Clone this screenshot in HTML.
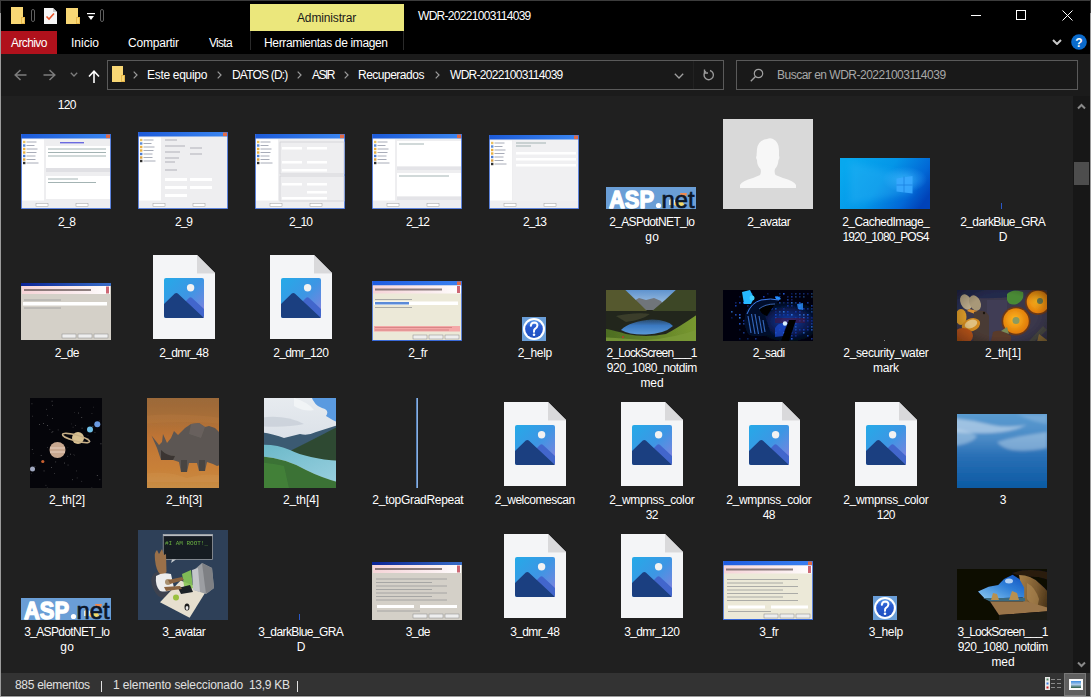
<!DOCTYPE html>
<html><head><meta charset="utf-8">
<style>
*{margin:0;padding:0;box-sizing:border-box}
html,body{width:1091px;height:697px;overflow:hidden;background:#9c9c9c}
body{position:relative;font-family:"Liberation Sans",sans-serif;font-size:12px;color:#fff}
.a{position:absolute}
#win{position:absolute;left:1px;top:1px;width:1089px;height:695px;background:#000;overflow:hidden}
#titlebar{position:absolute;left:0;top:0;width:1089px;height:53px;background:#000}
#addr{position:absolute;left:0;top:53px;width:1089px;height:42px;background:#1b1b1b}
#content{position:absolute;left:0;top:95px;width:1072px;height:577px;background:#202020;overflow:hidden}
#scroll{position:absolute;left:1072px;top:95px;width:17px;height:577px;background:#171717}
#status{position:absolute;left:0;top:672px;width:1089px;height:23px;background:#333333;border-bottom:1px solid #2a2a2a}
.rb{position:absolute;left:0;top:0;width:1091px;height:1px;background:#3c3c3c}
.bb{position:absolute;left:0;top:0;width:1px;height:13px;background:#3c3c3c;box-shadow:1090px 0 0 #3c3c3c}
.lb{position:absolute;left:0;top:12px;width:1px;height:685px;background:#4a5868}
.t{position:absolute;white-space:nowrap;line-height:15px}
.lbl{position:absolute;width:120px;text-align:center;line-height:15px;white-space:nowrap;color:#fff;}
.fi{position:absolute}
.lbl i{font-style:normal;position:relative;top:-1px}
.dlg,.dlgde,.dlgfr,.asp,.avatar,.win10,.thinblue,.help,.lock1,.lock2,.sadi,.dot,.food,.space,.rhino,.lake,.topgrad,.sky,.groot{position:absolute;overflow:hidden}
</style></head><body>
<svg width="0" height="0" style="position:absolute">
<defs>
<linearGradient id="imgg" x1="0" y1="0" x2="1" y2="1">
<stop offset="0" stop-color="#25aae8"/><stop offset="0.5" stop-color="#3d96e4"/><stop offset="0.8" stop-color="#6a88e0"/><stop offset="1" stop-color="#9a7ee0"/>
</linearGradient>
<symbol id="fileico" viewBox="0 0 62 84">
<path d="M0 0H44L62 18V84H0Z" fill="#f4f5f7"/>
<path d="M44 0V18H62Z" fill="#d9d9db"/>
<path d="M44 18H62V19H44Z" fill="#e8e8ea"/>
<rect x="11" y="23" width="40" height="40" rx="2" fill="url(#imgg)"/>
<path d="M32 47 L36.2 42.8 Q37.5 41.6 38.8 42.8 L51 54 V61 Q51 63 49 63 Z" fill="#4266cc"/>
<path d="M11 49 L21.8 38.6 Q23.3 37.2 24.8 38.6 L51 63 H13 Q11 63 11 61Z" fill="#1b3f80"/>
<circle cx="37.6" cy="32.7" r="3.7" fill="#f2f2f2"/>
</symbol>
</defs>
</svg>
<div id="win">
  <div id="titlebar"></div>
  <div id="addr"></div>
  <div id="content">
  </div>
  <div id="scroll"></div>
  <div id="status"></div>
</div>
<div id="abs" style="position:absolute;left:0;top:0;width:1091px;height:697px">
<!-- quick access toolbar -->
<svg class="a" style="left:11px;top:7px" width="14" height="17" viewBox="0 0 14 17"><path d="M0 0H12V10H14V17H0Z" fill="#f8d775"/><path d="M10 10H14V17H10Z" fill="#e8b84a"/><path d="M11 11H13V16H11Z" fill="#f8d775"/></svg>
<div class="a" style="left:31px;top:9px;width:4px;height:13px;border:1px solid #5e5e5e;border-radius:2px"></div>
<svg class="a" style="left:44px;top:8px" width="13" height="16" viewBox="0 0 13 16"><path d="M0 0H9L13 4V16H0Z" fill="#f5f5f5"/><path d="M9 0V4H13Z" fill="#c8c8c8"/><path d="M2.5 8.5L5 11L10 5.5" stroke="#e8552a" stroke-width="1.6" fill="none"/></svg>
<svg class="a" style="left:66px;top:8px" width="14" height="16" viewBox="0 0 14 16"><path d="M0 0H12V9H14V16H0Z" fill="#f8d775"/><path d="M10 9H14V16H10Z" fill="#e8b84a"/><path d="M11 10H13V15H11Z" fill="#f8d775"/></svg>
<svg class="a" style="left:87px;top:13px" width="8" height="8" viewBox="0 0 8 8"><rect x="0" y="0" width="8" height="1.2" fill="#fff"/><path d="M1 3H7L4 7Z" fill="#fff"/></svg>
<div class="a" style="left:100px;top:9px;width:4px;height:13px;border:1px solid #5e5e5e;border-radius:2px"></div>
<!-- contextual tab -->
<div class="a" style="left:250px;top:4px;width:154px;height:27px;background:#ebe77c"></div>
<div class="a" style="left:250px;top:31px;width:1px;height:19px;background:#2a2a2a"></div>
<div class="a" style="left:403px;top:31px;width:1px;height:19px;background:#2a2a2a"></div>
<div class="t" style="left:297px;top:11px;color:#1a1a1a;letter-spacing:-0.15px">Administrar</div>
<div class="t" style="left:418px;top:9px;color:#fff;letter-spacing:-0.7px">WDR-20221003114039</div>
<!-- window buttons -->
<div class="a" style="left:971px;top:15px;width:10px;height:1px;background:#fff"></div>
<div class="a" style="left:1016px;top:10px;width:10px;height:10px;border:1px solid #fff"></div>
<svg class="a" style="left:1062px;top:10px" width="11" height="11" viewBox="0 0 11 11"><path d="M0.5 0.5L10.5 10.5M10.5 0.5L0.5 10.5" stroke="#fff" stroke-width="1"/></svg>
<!-- ribbon tabs -->
<div class="a" style="left:1px;top:31px;width:56px;height:23px;background:#b0111c"></div>
<div class="t" style="left:11px;top:36px;letter-spacing:-0.6px">Archivo</div>
<div class="t" style="left:71px;top:36px">Inicio</div>
<div class="t" style="left:128px;top:36px;letter-spacing:-0.2px">Compartir</div>
<div class="t" style="left:209px;top:36px;letter-spacing:-0.7px">Vista</div>
<div class="t" style="left:264px;top:36px;letter-spacing:-0.35px">Herramientas de imagen</div>
<svg class="a" style="left:1052px;top:39px" width="10" height="6" viewBox="0 0 10 6"><path d="M1 1L5 5L9 1" stroke="#c8c8c8" stroke-width="2" fill="none"/></svg>
<svg class="a" style="left:1071px;top:34px" width="16" height="16" viewBox="0 0 16 16"><circle cx="8" cy="8" r="7.8" fill="#0b6bcc"/><text x="8" y="12.5" font-family="Liberation Sans" font-weight="bold" font-size="12" fill="#fff" text-anchor="middle">?</text></svg>
<!-- address row -->
<svg class="a" style="left:14px;top:69px" width="13" height="12" viewBox="0 0 13 12"><path d="M12.5 6H1.5M6.5 1L1.2 6L6.5 11" stroke="#7d7d7d" stroke-width="1.5" fill="none"/></svg>
<svg class="a" style="left:43px;top:69px" width="13" height="12" viewBox="0 0 13 12"><path d="M0.5 6H11.5M6.5 1L11.8 6L6.5 11" stroke="#7d7d7d" stroke-width="1.5" fill="none"/></svg>
<svg class="a" style="left:70px;top:72px" width="8" height="5" viewBox="0 0 8 5"><path d="M0.8 0.8L4 4L7.2 0.8" stroke="#7d7d7d" stroke-width="1.3" fill="none"/></svg>
<svg class="a" style="left:88px;top:70px" width="12" height="13" viewBox="0 0 12 13"><path d="M6 13V1.5M1 6.5L6 1.2L11 6.5" stroke="#fff" stroke-width="1.6" fill="none"/></svg>
<div class="a" style="left:107px;top:60px;width:617px;height:30px;border:1px solid #5a5a5a;background:#191919"></div>
<div class="a" style="left:693px;top:61px;width:1px;height:28px;background:#222"></div>
<svg class="a" style="left:112px;top:66px" width="13" height="16" viewBox="0 0 13 16"><path d="M0 0H11V9H13V16H0Z" fill="#f8d775"/><path d="M9 9H13V16H9Z" fill="#e8b84a"/><path d="M10 10H12V15H10Z" fill="#f8d775"/></svg>
<svg class="a" style="left:133px;top:71px" width="5" height="8" viewBox="0 0 5 8"><path d="M0.7 0.7L4 4L0.7 7.3" stroke="#9a9a9a" stroke-width="1.2" fill="none"/></svg>
<div class="t" style="left:147px;top:68px;letter-spacing:-0.3px">Este equipo</div>
<svg class="a" style="left:217px;top:71px" width="5" height="8" viewBox="0 0 5 8"><path d="M0.7 0.7L4 4L0.7 7.3" stroke="#9a9a9a" stroke-width="1.2" fill="none"/></svg>
<div class="t" style="left:232px;top:68px;letter-spacing:-0.8px">DATOS (D:)</div>
<svg class="a" style="left:297px;top:71px" width="5" height="8" viewBox="0 0 5 8"><path d="M0.7 0.7L4 4L0.7 7.3" stroke="#9a9a9a" stroke-width="1.2" fill="none"/></svg>
<div class="t" style="left:312px;top:68px;letter-spacing:-1.5px">ASIR</div>
<svg class="a" style="left:344px;top:71px" width="5" height="8" viewBox="0 0 5 8"><path d="M0.7 0.7L4 4L0.7 7.3" stroke="#9a9a9a" stroke-width="1.2" fill="none"/></svg>
<div class="t" style="left:358px;top:68px;letter-spacing:-0.5px">Recuperados</div>
<svg class="a" style="left:435px;top:71px" width="5" height="8" viewBox="0 0 5 8"><path d="M0.7 0.7L4 4L0.7 7.3" stroke="#9a9a9a" stroke-width="1.2" fill="none"/></svg>
<div class="t" style="left:450px;top:68px;letter-spacing:-0.7px">WDR-20221003114039</div>
<svg class="a" style="left:674px;top:73px" width="10" height="6" viewBox="0 0 10 6"><path d="M0.8 0.8L5 5L9.2 0.8" stroke="#a0a0a0" stroke-width="1.3" fill="none"/></svg>
<svg class="a" style="left:703px;top:69px" width="12" height="12" viewBox="0 0 12 12"><path d="M3 2.2A4.7 4.7 0 1 0 7 1.5" stroke="#9a9a9a" stroke-width="1.4" fill="none"/><path d="M1.5 0.5V4H5" stroke="#9a9a9a" stroke-width="1.4" fill="none"/></svg>
<div class="a" style="left:736px;top:60px;width:342px;height:30px;border:1px solid #5a5a5a;background:#191919"></div>
<svg class="a" style="left:750px;top:68px" width="14" height="14" viewBox="0 0 14 14"><circle cx="8.5" cy="5.5" r="4.2" stroke="#a0a0a0" stroke-width="1.2" fill="none"/><path d="M5.5 8.5L0.8 13.2" stroke="#a0a0a0" stroke-width="1.3"/></svg>
<div class="t" style="left:777px;top:68px;color:#a8a8a8;letter-spacing:-0.5px">Buscar en WDR-20221003114039</div>
<!-- scrollbar -->
<svg class="a" style="left:1077px;top:103px" width="9" height="7" viewBox="0 0 9 7"><path d="M1 5.5L4.5 2L8 5.5" stroke="#8a8a8a" stroke-width="2" fill="none"/></svg>
<div class="a" style="left:1074px;top:162px;width:15px;height:23px;background:#4d4d4d"></div>
<svg class="a" style="left:1077px;top:661px" width="9" height="7" viewBox="0 0 9 7"><path d="M1 1.5L4.5 5L8 1.5" stroke="#8a8a8a" stroke-width="2" fill="none"/></svg>
<!-- status bar -->
<div class="t" style="left:15px;top:678px;color:#e0e0e0;letter-spacing:-0.3px">885 elementos</div>
<div class="a" style="left:101px;top:681px;width:1px;height:11px;background:#e0e0e0"></div>
<div class="t" style="left:113px;top:678px;color:#e0e0e0;letter-spacing:-0.12px">1 elemento seleccionado</div>
<div class="t" style="left:249px;top:678px;color:#e0e0e0;letter-spacing:-0.3px">13,9 KB</div>
<div class="a" style="left:297px;top:681px;width:1px;height:11px;background:#e0e0e0"></div>
<svg class="a" style="left:1045px;top:677px" width="16" height="13" viewBox="0 0 16 13"><rect x="0" y="0" width="5" height="13" fill="#e8e8e8"/><rect x="1.5" y="1.5" width="2" height="2" fill="#5a8a6a"/><rect x="1.5" y="5.5" width="2" height="2" fill="#3a7ae0"/><rect x="1.5" y="9.5" width="2" height="2" fill="#d02020"/><path d="M6 2.5H10M12 2.5H16M6 6.5H10M12 6.5H16M6 10.5H10M12 10.5H16" stroke="#8a8a8a" stroke-width="1"/></svg>
<div class="a" style="left:1064px;top:673px;width:22px;height:23px;background:#5f5f5f;border:1px solid #787878"></div>
<svg class="a" style="left:1069px;top:679px" width="14" height="11" viewBox="0 0 14 11"><rect width="14" height="11" fill="#fafafa"/><defs><linearGradient id="vg" x1="0" y1="0" x2="0" y2="1"><stop offset="0" stop-color="#3d8de0"/><stop offset="0.5" stop-color="#a8c8e8"/><stop offset="1" stop-color="#2a5a40"/></linearGradient></defs><rect x="2" y="2" width="10" height="7" fill="url(#vg)"/></svg>
<div class="rb"></div><div class="bb"></div>

<div id="clip" style="position:absolute;left:1px;top:96px;width:1072px;height:577px;overflow:hidden">
<div style="position:absolute;left:-1px;top:-96px;width:1091px;height:697px">
<div class="lbl" style="left:7.0px;top:97.7px"><div style="letter-spacing:-0.677px;text-indent:-0.677px">120</div></div>
<svg class="a" style="left:21px;top:134px" width="90" height="75" viewBox="0 0 90 75"><rect width="90" height="75" fill="#eeeef0"/><defs><linearGradient id="xpt" x1="0" x2="1"><stop offset="0" stop-color="#1c5ad8"/><stop offset="1" stop-color="#3b86f0"/></linearGradient></defs><rect width="90" height="4.5" fill="url(#xpt)"/><rect x="85" y="0.5" width="4" height="3.6" fill="#e06a48"/><rect x="0" y="0" width="0.8" height="75" fill="#3a6ad8"/><rect x="89.2" y="0" width="0.8" height="75" fill="#3a6ad8"/><rect x="0" y="74.2" width="90" height="0.8" fill="#3a6ad8"/><rect x="1" y="5.5" width="22" height="61" fill="#ffffff"/><path d="M5.5 8H15.5" stroke="#a8acb8" stroke-width="1.0"/><path d="M5.5 11.5H13.5" stroke="#a8acb8" stroke-width="1.0"/><path d="M5.5 15H16.5" stroke="#a8acb8" stroke-width="1.0"/><path d="M5.5 18.5H15.5" stroke="#a8acb8" stroke-width="1.0"/><path d="M5.5 22H14.5" stroke="#a8acb8" stroke-width="1.0"/><path d="M5.5 25.5H14.5" stroke="#a8acb8" stroke-width="1.0"/><path d="M5.5 29H17.5" stroke="#a8acb8" stroke-width="1.0"/><rect x="2" y="6.8" width="2.4" height="2.4" fill="#e8c060"/><rect x="2" y="10.3" width="2.4" height="2.4" fill="#5a8ad8"/><rect x="2" y="13.8" width="2.4" height="2.4" fill="#e8b040"/><rect x="2" y="17.3" width="2.4" height="2.4" fill="#e8b040"/><rect x="2" y="20.8" width="2.4" height="2.4" fill="#4a7ad0"/><rect x="2" y="24.3" width="2.4" height="2.4" fill="#d8a040"/><rect x="2" y="27.8" width="2.4" height="2.4" fill="#303030"/><rect x="25" y="12" width="64" height="22" fill="#fff"/><rect x="25" y="34" width="64" height="4" fill="#e0e0e4"/><rect x="25" y="42" width="64" height="23" fill="#fff"/><path d="M27 15H85" stroke="#9aa" stroke-width="0.9"/><path d="M27 18.5H85" stroke="#9aa" stroke-width="0.9"/><path d="M27 22H85" stroke="#9aa" stroke-width="0.9"/><path d="M27 45H57" stroke="#9aa" stroke-width="0.9"/><path d="M27 48.5H75" stroke="#9aa" stroke-width="0.9"/><rect x="39" y="8" width="24" height="1.4" fill="#6a6ae0"/><rect x="15" y="69.5" width="12" height="3" fill="#fff" stroke="#a0a0a0" stroke-width="0.5"/><rect x="55" y="69.5" width="12" height="3" fill="#fff" stroke="#a0a0a0" stroke-width="0.5"/></svg>
<svg class="a" style="left:138px;top:132px" width="90" height="77" viewBox="0 0 90 77"><rect width="90" height="77" fill="#eeeef0"/><defs><linearGradient id="xpt" x1="0" x2="1"><stop offset="0" stop-color="#1c5ad8"/><stop offset="1" stop-color="#3b86f0"/></linearGradient></defs><rect width="90" height="4.5" fill="url(#xpt)"/><rect x="85" y="0.5" width="4" height="3.6" fill="#e06a48"/><rect x="0" y="0" width="0.8" height="77" fill="#3a6ad8"/><rect x="89.2" y="0" width="0.8" height="77" fill="#3a6ad8"/><rect x="0" y="76.2" width="90" height="0.8" fill="#3a6ad8"/><rect x="1" y="5.5" width="22" height="63" fill="#ffffff"/><path d="M5.5 8H15.5" stroke="#a8acb8" stroke-width="1.0"/><path d="M5.5 11.5H13.5" stroke="#a8acb8" stroke-width="1.0"/><path d="M5.5 15H16.5" stroke="#a8acb8" stroke-width="1.0"/><path d="M5.5 18.5H15.5" stroke="#a8acb8" stroke-width="1.0"/><path d="M5.5 22H14.5" stroke="#a8acb8" stroke-width="1.0"/><path d="M5.5 25.5H14.5" stroke="#a8acb8" stroke-width="1.0"/><path d="M5.5 29H17.5" stroke="#a8acb8" stroke-width="1.0"/><rect x="2" y="6.8" width="2.4" height="2.4" fill="#e8c060"/><rect x="2" y="10.3" width="2.4" height="2.4" fill="#5a8ad8"/><rect x="2" y="13.8" width="2.4" height="2.4" fill="#e8b040"/><rect x="2" y="17.3" width="2.4" height="2.4" fill="#e8b040"/><rect x="2" y="20.8" width="2.4" height="2.4" fill="#4a7ad0"/><rect x="2" y="24.3" width="2.4" height="2.4" fill="#d8a040"/><rect x="2" y="27.8" width="2.4" height="2.4" fill="#303030"/><path d="M27 8H39" stroke="#b0b0b8" stroke-width="1"/><path d="M27 14H47" stroke="#b0b0b8" stroke-width="1"/><path d="M27 20H42" stroke="#b0b0b8" stroke-width="1"/><path d="M27 26H41" stroke="#b0b0b8" stroke-width="1"/><path d="M27 30H37" stroke="#b0b0b8" stroke-width="1"/><path d="M52 16H64" stroke="#b0b0b8" stroke-width="1"/><path d="M52 22H64" stroke="#b0b0b8" stroke-width="1"/><path d="M27 38H39" stroke="#b0b0b8" stroke-width="1"/><rect x="27" y="46" width="22" height="3" fill="#fff"/><rect x="52" y="46" width="22" height="3" fill="#fff"/><rect x="27" y="54" width="22" height="3" fill="#fff"/><rect x="52" y="54" width="22" height="3" fill="#fff"/><rect x="27" y="62" width="22" height="3" fill="#fff"/><rect x="15" y="71.5" width="12" height="3" fill="#fff" stroke="#a0a0a0" stroke-width="0.5"/><rect x="55" y="71.5" width="12" height="3" fill="#fff" stroke="#a0a0a0" stroke-width="0.5"/></svg>
<svg class="a" style="left:255px;top:134px" width="90" height="75" viewBox="0 0 90 75"><rect width="90" height="75" fill="#eeeef0"/><defs><linearGradient id="xpt" x1="0" x2="1"><stop offset="0" stop-color="#1c5ad8"/><stop offset="1" stop-color="#3b86f0"/></linearGradient></defs><rect width="90" height="4.5" fill="url(#xpt)"/><rect x="85" y="0.5" width="4" height="3.6" fill="#e06a48"/><rect x="0" y="0" width="0.8" height="75" fill="#3a6ad8"/><rect x="89.2" y="0" width="0.8" height="75" fill="#3a6ad8"/><rect x="0" y="74.2" width="90" height="0.8" fill="#3a6ad8"/><rect x="1" y="5.5" width="22" height="61" fill="#ffffff"/><path d="M5.5 8H15.5" stroke="#a8acb8" stroke-width="1.0"/><path d="M5.5 11.5H13.5" stroke="#a8acb8" stroke-width="1.0"/><path d="M5.5 15H16.5" stroke="#a8acb8" stroke-width="1.0"/><path d="M5.5 18.5H15.5" stroke="#a8acb8" stroke-width="1.0"/><path d="M5.5 22H14.5" stroke="#a8acb8" stroke-width="1.0"/><path d="M5.5 25.5H14.5" stroke="#a8acb8" stroke-width="1.0"/><path d="M5.5 29H17.5" stroke="#a8acb8" stroke-width="1.0"/><rect x="2" y="6.8" width="2.4" height="2.4" fill="#e8c060"/><rect x="2" y="10.3" width="2.4" height="2.4" fill="#5a8ad8"/><rect x="2" y="13.8" width="2.4" height="2.4" fill="#e8b040"/><rect x="2" y="17.3" width="2.4" height="2.4" fill="#e8b040"/><rect x="2" y="20.8" width="2.4" height="2.4" fill="#4a7ad0"/><rect x="2" y="24.3" width="2.4" height="2.4" fill="#d8a040"/><rect x="2" y="27.8" width="2.4" height="2.4" fill="#303030"/><rect x="25" y="8" width="64" height="32" fill="none" stroke="#d0d0d4" stroke-width="0.8"/><rect x="25" y="42" width="64" height="25" fill="none" stroke="#d0d0d4" stroke-width="0.8"/><rect x="27" y="13" width="20" height="2.5" fill="#fff"/><rect x="52" y="13" width="20" height="2.5" fill="#fff"/><rect x="27" y="27" width="20" height="2.5" fill="#fff"/><rect x="52" y="27" width="20" height="2.5" fill="#fff"/><rect x="27" y="35" width="45" height="2.5" fill="#fff"/><rect x="27" y="49" width="20" height="2.5" fill="#fff"/><rect x="52" y="49" width="20" height="2.5" fill="#fff"/><rect x="52" y="57" width="20" height="2.5" fill="#fff"/><rect x="27" y="63" width="45" height="2.5" fill="#fff"/><rect x="15" y="69.5" width="12" height="3" fill="#fff" stroke="#a0a0a0" stroke-width="0.5"/><rect x="55" y="69.5" width="12" height="3" fill="#fff" stroke="#a0a0a0" stroke-width="0.5"/></svg>
<svg class="a" style="left:372px;top:134px" width="90" height="75" viewBox="0 0 90 75"><rect width="90" height="75" fill="#eeeef0"/><defs><linearGradient id="xpt" x1="0" x2="1"><stop offset="0" stop-color="#1c5ad8"/><stop offset="1" stop-color="#3b86f0"/></linearGradient></defs><rect width="90" height="4.5" fill="url(#xpt)"/><rect x="85" y="0.5" width="4" height="3.6" fill="#e06a48"/><rect x="0" y="0" width="0.8" height="75" fill="#3a6ad8"/><rect x="89.2" y="0" width="0.8" height="75" fill="#3a6ad8"/><rect x="0" y="74.2" width="90" height="0.8" fill="#3a6ad8"/><rect x="1" y="5.5" width="22" height="61" fill="#ffffff"/><path d="M5.5 8H15.5" stroke="#a8acb8" stroke-width="1.0"/><path d="M5.5 11.5H13.5" stroke="#a8acb8" stroke-width="1.0"/><path d="M5.5 15H16.5" stroke="#a8acb8" stroke-width="1.0"/><path d="M5.5 18.5H15.5" stroke="#a8acb8" stroke-width="1.0"/><path d="M5.5 22H14.5" stroke="#a8acb8" stroke-width="1.0"/><path d="M5.5 25.5H14.5" stroke="#a8acb8" stroke-width="1.0"/><path d="M5.5 29H17.5" stroke="#a8acb8" stroke-width="1.0"/><rect x="2" y="6.8" width="2.4" height="2.4" fill="#e8c060"/><rect x="2" y="10.3" width="2.4" height="2.4" fill="#5a8ad8"/><rect x="2" y="13.8" width="2.4" height="2.4" fill="#e8b040"/><rect x="2" y="17.3" width="2.4" height="2.4" fill="#e8b040"/><rect x="2" y="20.8" width="2.4" height="2.4" fill="#4a7ad0"/><rect x="2" y="24.3" width="2.4" height="2.4" fill="#d8a040"/><rect x="2" y="27.8" width="2.4" height="2.4" fill="#303030"/><rect x="25" y="7" width="64" height="25" fill="#fff"/><rect x="25" y="39" width="64" height="23" fill="#fff"/><rect x="25" y="33" width="64" height="3" fill="#e4e4e8"/><rect x="25" y="63" width="64" height="3" fill="#e4e4e8"/><path d="M27 10H52" stroke="#9aa" stroke-width="0.9"/><path d="M27 42H77" stroke="#9aa" stroke-width="0.9"/><rect x="15" y="69.5" width="12" height="3" fill="#fff" stroke="#a0a0a0" stroke-width="0.5"/><rect x="55" y="69.5" width="12" height="3" fill="#fff" stroke="#a0a0a0" stroke-width="0.5"/></svg>
<svg class="a" style="left:489px;top:135px" width="90" height="74" viewBox="0 0 90 74"><rect width="90" height="74" fill="#eeeef0"/><defs><linearGradient id="xpt" x1="0" x2="1"><stop offset="0" stop-color="#1c5ad8"/><stop offset="1" stop-color="#3b86f0"/></linearGradient></defs><rect width="90" height="4.5" fill="url(#xpt)"/><rect x="85" y="0.5" width="4" height="3.6" fill="#e06a48"/><rect x="0" y="0" width="0.8" height="74" fill="#3a6ad8"/><rect x="89.2" y="0" width="0.8" height="74" fill="#3a6ad8"/><rect x="0" y="73.2" width="90" height="0.8" fill="#3a6ad8"/><rect x="1" y="5.5" width="22" height="60" fill="#ffffff"/><path d="M5.5 8H15.5" stroke="#a8acb8" stroke-width="1.0"/><path d="M5.5 11.5H13.5" stroke="#a8acb8" stroke-width="1.0"/><path d="M5.5 15H16.5" stroke="#a8acb8" stroke-width="1.0"/><path d="M5.5 18.5H15.5" stroke="#a8acb8" stroke-width="1.0"/><path d="M5.5 22H14.5" stroke="#a8acb8" stroke-width="1.0"/><path d="M5.5 25.5H14.5" stroke="#a8acb8" stroke-width="1.0"/><path d="M5.5 29H17.5" stroke="#a8acb8" stroke-width="1.0"/><rect x="2" y="6.8" width="2.4" height="2.4" fill="#e8c060"/><rect x="2" y="10.3" width="2.4" height="2.4" fill="#5a8ad8"/><rect x="2" y="13.8" width="2.4" height="2.4" fill="#e8b040"/><rect x="2" y="17.3" width="2.4" height="2.4" fill="#e8b040"/><rect x="2" y="20.8" width="2.4" height="2.4" fill="#4a7ad0"/><rect x="2" y="24.3" width="2.4" height="2.4" fill="#d8a040"/><rect x="2" y="27.8" width="2.4" height="2.4" fill="#303030"/><rect x="24" y="5" width="65" height="61" fill="#f0f0f2"/><path d="M27 8H57" stroke="#9aa" stroke-width="0.9"/><path d="M27 11H42" stroke="#9aa" stroke-width="0.9"/><rect x="27" y="17" width="60" height="2.5" fill="#fff"/><rect x="27" y="23" width="60" height="2.5" fill="#fff"/><rect x="27" y="29" width="60" height="2.5" fill="#fff"/><rect x="15" y="68.5" width="12" height="3" fill="#fff" stroke="#a0a0a0" stroke-width="0.5"/><rect x="55" y="68.5" width="12" height="3" fill="#fff" stroke="#a0a0a0" stroke-width="0.5"/></svg>
<svg class="a" style="left:606px;top:187px" width="90" height="22" viewBox="0 0 90 22"><rect width="90" height="22" fill="#6a9ed6"/><text x="3" y="20.5" font-family="Liberation Sans" font-weight="bold" font-size="24" fill="#fff" stroke="#fff" stroke-width="1.4" stroke-linejoin="round" textLength="45" lengthAdjust="spacingAndGlyphs">ASP</text><circle cx="52.5" cy="18.5" r="2.6" fill="#fff"/><path d="M63 13 Q66 11 69 13 V18 H63Z" fill="#d8eef8"/><path d="M68 18 Q73 21 78 18 L77 15 H69Z" fill="#f4d868"/><path d="M74 6 H81 L80 10 H75Z" fill="#f08a50"/><text x="55.5" y="20.5" font-family="Liberation Sans" font-size="24" fill="#0c1628" stroke="#0c1628" stroke-width="0.7" textLength="33" lengthAdjust="spacingAndGlyphs">net</text></svg>
<svg class="a" style="left:723px;top:119px" width="90" height="90" viewBox="0 0 90 90"><rect width="90" height="90" fill="#d9d9d9"/><path d="M17 69 L17 66 Q19 62 30 59 L37 56 Q38.5 53 37.5 50 Q34 47 34 41 Q32.5 39 33.5 37 L34 30 Q35 21 44 20 Q47 18.5 50 20 Q56 23 56 31 L56 37 Q57 39 55.5 41 Q55 47 52 50 Q51 53 52.5 56 L60 59 Q71 62 73 66 L73 69 Z" fill="#f7f7f7"/></svg>
<svg class="a" style="left:840px;top:158px" width="90" height="51" viewBox="0 0 90 51"><defs><linearGradient id="w10" x1="0" y1="0.3" x2="1" y2="0.7"><stop offset="0" stop-color="#08a8ee"/><stop offset="0.45" stop-color="#0496e8"/><stop offset="0.8" stop-color="#0268d6"/><stop offset="1" stop-color="#0042b8"/></linearGradient><radialGradient id="w10g" cx="0.72" cy="0.42" r="0.25"><stop offset="0" stop-color="#40b8ff" stop-opacity="0.7"/><stop offset="1" stop-color="#40b8ff" stop-opacity="0"/></radialGradient></defs><rect width="90" height="51" fill="url(#w10)"/><rect width="90" height="51" fill="url(#w10g)"/><defs><filter id="bw10" x="-20%" y="-20%" width="140%" height="140%"><feGaussianBlur stdDeviation="3"/></filter></defs><path d="M10 4 L72 19 L72 35 L10 46 Z" fill="#38b8f8" opacity="0.3" filter="url(#bw10)"/><path d="M56.5 20.5 L72.5 18 V35.5 L56.5 33.5 Z" fill="#3aa8ff" opacity="0.9"/><path d="M64 18.5V35M56.5 27H72.5" stroke="#1a80e0" stroke-width="0.8"/></svg>
<div class="thinblue" style="left:1001px;top:203px;width:1px;height:6px;background:#2a58c8"></div>
<div class="lbl" style="left:7.0px;top:214.8px"><div style="letter-spacing:-1.010px;text-indent:-1.010px">2<i>_</i>8</div></div>
<div class="lbl" style="left:124.0px;top:214.8px"><div style="letter-spacing:-1.010px;text-indent:-1.010px">2<i>_</i>9</div></div>
<div class="lbl" style="left:241.0px;top:214.8px"><div style="letter-spacing:-0.926px;text-indent:-0.926px">2<i>_</i>10</div></div>
<div class="lbl" style="left:358.0px;top:214.8px"><div style="letter-spacing:-0.926px;text-indent:-0.926px">2<i>_</i>12</div></div>
<div class="lbl" style="left:475.0px;top:214.8px"><div style="letter-spacing:-0.926px;text-indent:-0.926px">2<i>_</i>13</div></div>
<div class="lbl" style="left:592.0px;top:214.8px"><div style="letter-spacing:-0.647px;text-indent:-0.647px">2<i>_</i>ASPdotNET<i>_</i>lo</div><div style="letter-spacing:0.320px;text-indent:0.320px">go</div></div>
<div class="lbl" style="left:709.0px;top:214.8px"><div style="letter-spacing:-0.463px;text-indent:-0.463px">2<i>_</i>avatar</div></div>
<div class="lbl" style="left:826.0px;top:214.8px"><div style="letter-spacing:-0.552px;text-indent:-0.552px">2<i>_</i>CachedImage<i>_</i></div><div style="letter-spacing:-0.912px;text-indent:-0.912px">1920<i>_</i>1080<i>_</i>POS4</div></div>
<div class="lbl" style="left:943.0px;top:214.8px"><div style="letter-spacing:-0.599px;text-indent:-0.599px">2<i>_</i>darkBlue<i>_</i>GRA</div><div style="letter-spacing:-0.672px;text-indent:-0.672px">D</div></div>
<svg class="a" style="left:21px;top:283px" width="90" height="57" viewBox="0 0 90 57"><rect width="90" height="57" fill="#d4d0c8"/><defs><linearGradient id="clt" x1="0" x2="1"><stop offset="0" stop-color="#0a2496"/><stop offset="1" stop-color="#3a6ec8"/></linearGradient></defs><rect width="90" height="3" fill="url(#clt)"/><defs><linearGradient id="pk" x1="0" x2="1"><stop offset="0" stop-color="#f6d4d8"/><stop offset="0.7" stop-color="#fbeef0"/><stop offset="1" stop-color="#ffffff"/></linearGradient></defs><rect x="1" y="3" width="88" height="8" fill="url(#pk)"/><path d="M3 7H70" stroke="#6a5a5a" stroke-width="2.2" opacity="0.75"/><rect x="85" y="3.5" width="3" height="7" fill="#c04050" opacity="0.8"/><path d="M3 17H40" stroke="#999" stroke-width="0.8"/><rect x="2" y="19" width="84" height="3.5" fill="#fff"/><path d="M3 25H40" stroke="#999" stroke-width="0.8"/><rect x="41" y="51" width="14" height="4" fill="#eee" stroke="#888" stroke-width="0.5"/><rect x="57" y="51" width="14" height="4" fill="#eee" stroke="#888" stroke-width="0.5"/><rect x="73" y="51" width="14" height="4" fill="#eee" stroke="#888" stroke-width="0.5"/></svg>
<svg class="fi" style="left:153.0px;top:255px" width="62" height="84"><use href="#fileico"/></svg>
<svg class="fi" style="left:270.0px;top:255px" width="62" height="84"><use href="#fileico"/></svg>
<svg class="a" style="left:372px;top:281px" width="90" height="60" viewBox="0 0 90 60"><rect width="90" height="60" fill="#ece9d8"/><defs><linearGradient id="xpt2" x1="0" x2="1"><stop offset="0" stop-color="#1e5ce0"/><stop offset="1" stop-color="#3a80f0"/></linearGradient></defs><rect width="90" height="4.5" fill="url(#xpt2)"/><rect x="85" y="0.5" width="4" height="3.6" fill="#e06a48"/><rect x="0" y="0" width="0.8" height="60" fill="#3a6ad8"/><rect x="89.2" y="0" width="0.8" height="60" fill="#3a6ad8"/><rect x="0" y="59" width="90" height="1" fill="#3a6ad8"/><defs><linearGradient id="pk" x1="0" x2="1"><stop offset="0" stop-color="#f6d4d8"/><stop offset="0.7" stop-color="#fbeef0"/><stop offset="1" stop-color="#ffffff"/></linearGradient></defs><rect x="1" y="4.5" width="88" height="8" fill="url(#pk)"/><path d="M3 8.5H70" stroke="#6a5a5a" stroke-width="2.2" opacity="0.75"/><rect x="85" y="5.0" width="3" height="7" fill="#c04050" opacity="0.8"/><path d="M3 18.5H40" stroke="#999" stroke-width="0.8"/><rect x="2" y="20.5" width="84" height="3.5" fill="#fff"/><rect x="3" y="21.0" width="34" height="2.5" fill="#5a8ad8"/><path d="M3 26.5H40" stroke="#999" stroke-width="0.8"/><rect x="2" y="45" width="86" height="5.5" fill="#f5a8a8"/><path d="M3 46.5H80M3 49H77" stroke="#a04848" stroke-width="0.6" opacity="0.6"/><rect x="41" y="54" width="14" height="4" fill="#eee" stroke="#888" stroke-width="0.5"/><rect x="57" y="54" width="14" height="4" fill="#eee" stroke="#888" stroke-width="0.5"/><rect x="73" y="54" width="14" height="4" fill="#eee" stroke="#888" stroke-width="0.5"/></svg>
<svg class="a" style="left:522px;top:317px" width="24" height="24" viewBox="0 0 24 24"><defs><linearGradient id="hg" x1="0" y1="0" x2="0" y2="1"><stop offset="0" stop-color="#5a9ae8"/><stop offset="0.35" stop-color="#2a5cd0"/><stop offset="1" stop-color="#2050c0"/></linearGradient></defs><rect width="24" height="24" fill="#6a9ed8"/><circle cx="12" cy="12" r="11" fill="#fff"/><circle cx="12" cy="12" r="8.9" fill="url(#hg)"/><path d="M8.8 8.8 Q9.3 5.6 12.4 5.6 Q15.6 5.8 15.4 8.6 Q15.1 10.6 13 11.9 Q11.8 12.8 12 14.8" stroke="#fff" stroke-width="2" fill="none" stroke-linecap="round"/><circle cx="12" cy="17.8" r="1.3" fill="#fff"/></svg>
<svg class="a" style="left:606px;top:290px" width="90" height="51" viewBox="0 0 90 51"><defs><filter id="block1" x="-5%" y="-5%" width="110%" height="110%"><feGaussianBlur stdDeviation="0.6"/></filter></defs><g filter="url(#block1)"><defs><linearGradient id="l1s" x1="0" y1="0" x2="0" y2="1"><stop offset="0" stop-color="#4a84c8"/><stop offset="1" stop-color="#b0cce6"/></linearGradient><linearGradient id="l1w" x1="0" y1="0" x2="0" y2="1"><stop offset="0" stop-color="#2a4a68"/><stop offset="0.4" stop-color="#3a78c0"/><stop offset="1" stop-color="#5a98d8"/></linearGradient><linearGradient id="l1g" x1="0" y1="0" x2="1" y2="0"><stop offset="0" stop-color="#4a6a22"/><stop offset="1" stop-color="#7a9a30"/></linearGradient></defs><rect x="-5" y="-5" width="100" height="61" fill="#24281e"/><rect x="10" y="-5" width="68" height="24" fill="url(#l1s)"/><path d="M26 12 L33 8 L40 10 L48 8 L55 11 L60 20 L30 20Z" fill="#70747a"/><path d="M-5 -5 H14 Q30 10 42 22 L-5 24Z" fill="#54582e"/><path d="M95 -5 H75 Q62 8 45 22 L95 24Z" fill="#3c4626"/><path d="M-5 21 H95 V40 H-5Z" fill="#22261e"/><path d="M10 26 Q30 22 44 24 Q36 30 20 32Z" fill="#3a3e2a"/><path d="M15 40 Q24 31 46 29.5 Q62 30 67 36 Q58 44 40 44.5 Q24 45 15 40Z" fill="url(#l1w)"/><path d="M-5 38 Q10 41 20 44 Q40 48 60 44 Q72 38 95 22 V56 H-5Z" fill="url(#l1g)"/><path d="M-5 47 Q20 49 40 50 Q70 48 95 38 V56 H-5Z" fill="#7a9a38" opacity="0.8"/><circle cx="17" cy="47" r="1.2" fill="#c03030" opacity="0.7"/></g></svg>
<svg class="a" style="left:723px;top:290px" width="90" height="51" viewBox="0 0 90 51"><defs><filter id="bsadi" x="-5%" y="-5%" width="110%" height="110%"><feGaussianBlur stdDeviation="0.5"/></filter></defs><g filter="url(#bsadi)"><rect x="-5" y="-5" width="100" height="61" fill="#00020a"/><defs><radialGradient id="sglow" cx="0.7" cy="0.6" r="0.35"><stop offset="0" stop-color="#1a50e0" stop-opacity="0.75"/><stop offset="1" stop-color="#1a50e0" stop-opacity="0"/></radialGradient></defs><rect x="-5" y="-5" width="100" height="61" fill="url(#sglow)"/><rect x="8" y="21" width="1.6" height="1.6" fill="#3a8aff" opacity="0.66"/><rect x="8" y="27" width="1.6" height="1.6" fill="#1a3ab0" opacity="0.42"/><rect x="12" y="12" width="1.6" height="1.6" fill="#1a4ad8" opacity="0.45"/><rect x="12" y="15" width="1.6" height="1.6" fill="#1a4ad8" opacity="0.74"/><rect x="12" y="24" width="1.6" height="1.6" fill="#2a6aff" opacity="0.67"/><rect x="16" y="6" width="1.6" height="1.6" fill="#1a3ab0" opacity="0.36"/><rect x="16" y="12" width="1.6" height="1.6" fill="#1a4ad8" opacity="0.77"/><rect x="16" y="24" width="1.6" height="1.6" fill="#2a6aff" opacity="0.81"/><rect x="16" y="27" width="1.6" height="1.6" fill="#3a8aff" opacity="0.84"/><rect x="16" y="33" width="1.6" height="1.6" fill="#2a6aff" opacity="0.74"/><rect x="16" y="39" width="1.6" height="1.6" fill="#1a3ab0" opacity="0.36"/><rect x="16" y="48" width="1.6" height="1.6" fill="#1a4ad8" opacity="0.36"/><rect x="20" y="12" width="1.6" height="1.6" fill="#2a6aff" opacity="0.84"/><rect x="20" y="30" width="1.6" height="1.6" fill="#1a3ab0" opacity="0.85"/><rect x="20" y="33" width="1.6" height="1.6" fill="#2a6aff" opacity="0.55"/><rect x="20" y="42" width="1.6" height="1.6" fill="#2a6aff" opacity="0.46"/><rect x="24" y="9" width="1.6" height="1.6" fill="#1a4ad8" opacity="0.45"/><rect x="24" y="15" width="1.6" height="1.6" fill="#1a3ab0" opacity="0.54"/><rect x="24" y="33" width="1.6" height="1.6" fill="#2a6aff" opacity="0.51"/><rect x="24" y="36" width="1.6" height="1.6" fill="#2a6aff" opacity="0.71"/><rect x="24" y="39" width="1.6" height="1.6" fill="#2a6aff" opacity="0.69"/><rect x="24" y="48" width="1.6" height="1.6" fill="#1a4ad8" opacity="0.40"/><rect x="28" y="3" width="1.6" height="1.6" fill="#1a3ab0" opacity="0.47"/><rect x="28" y="21" width="1.6" height="1.6" fill="#1a4ad8" opacity="0.41"/><rect x="28" y="33" width="1.6" height="1.6" fill="#2a6aff" opacity="0.81"/><rect x="28" y="36" width="1.6" height="1.6" fill="#1a4ad8" opacity="0.38"/><rect x="28" y="42" width="1.6" height="1.6" fill="#1a4ad8" opacity="0.44"/><rect x="32" y="27" width="1.6" height="1.6" fill="#1a4ad8" opacity="0.59"/><rect x="32" y="36" width="1.6" height="1.6" fill="#1a4ad8" opacity="0.59"/><rect x="32" y="48" width="1.6" height="1.6" fill="#1a3ab0" opacity="0.72"/><rect x="40" y="6" width="1.6" height="1.6" fill="#1a4ad8" opacity="0.85"/><rect x="40" y="30" width="1.6" height="1.6" fill="#1a4ad8" opacity="0.51"/><rect x="40" y="33" width="1.6" height="1.6" fill="#1a4ad8" opacity="0.47"/><rect x="44" y="3" width="1.6" height="1.6" fill="#1a3ab0" opacity="0.42"/><rect x="48" y="18" width="1.6" height="1.6" fill="#1a4ad8" opacity="0.83"/><rect x="52" y="6" width="1.6" height="1.6" fill="#1a4ad8" opacity="0.76"/><rect x="52" y="9" width="1.6" height="1.6" fill="#1a4ad8" opacity="0.69"/><rect x="52" y="12" width="1.6" height="1.6" fill="#1a3ab0" opacity="0.50"/><rect x="52" y="18" width="1.6" height="1.6" fill="#2a6aff" opacity="0.55"/><rect x="52" y="21" width="1.6" height="1.6" fill="#1a3ab0" opacity="0.47"/><rect x="52" y="24" width="1.6" height="1.6" fill="#1a4ad8" opacity="0.84"/><rect x="52" y="27" width="1.6" height="1.6" fill="#1a4ad8" opacity="0.66"/><rect x="52" y="42" width="1.6" height="1.6" fill="#3a8aff" opacity="0.48"/><rect x="56" y="3" width="1.6" height="1.6" fill="#1a4ad8" opacity="0.44"/><rect x="56" y="6" width="1.6" height="1.6" fill="#1a3ab0" opacity="0.62"/><rect x="56" y="12" width="1.6" height="1.6" fill="#2a6aff" opacity="0.55"/><rect x="56" y="21" width="1.6" height="1.6" fill="#3a8aff" opacity="0.41"/><rect x="56" y="24" width="1.6" height="1.6" fill="#1a4ad8" opacity="0.54"/><rect x="56" y="39" width="1.6" height="1.6" fill="#2a6aff" opacity="0.40"/><rect x="60" y="3" width="1.6" height="1.6" fill="#2a6aff" opacity="0.80"/><rect x="60" y="12" width="1.6" height="1.6" fill="#1a3ab0" opacity="0.48"/><rect x="60" y="18" width="1.6" height="1.6" fill="#1a4ad8" opacity="0.37"/><rect x="60" y="21" width="1.6" height="1.6" fill="#3a8aff" opacity="0.73"/><rect x="60" y="24" width="1.6" height="1.6" fill="#1a4ad8" opacity="0.46"/><rect x="60" y="30" width="1.6" height="1.6" fill="#1a4ad8" opacity="0.44"/><rect x="60" y="33" width="1.6" height="1.6" fill="#2a6aff" opacity="0.59"/><rect x="60" y="42" width="1.6" height="1.6" fill="#3a8aff" opacity="0.82"/><rect x="60" y="45" width="1.6" height="1.6" fill="#1a4ad8" opacity="0.73"/><rect x="60" y="48" width="1.6" height="1.6" fill="#1a3ab0" opacity="0.77"/><rect x="64" y="6" width="1.6" height="1.6" fill="#1a3ab0" opacity="0.51"/><rect x="64" y="9" width="1.6" height="1.6" fill="#2a6aff" opacity="0.50"/><rect x="64" y="12" width="1.6" height="1.6" fill="#1a3ab0" opacity="0.64"/><rect x="64" y="15" width="1.6" height="1.6" fill="#1a4ad8" opacity="0.60"/><rect x="64" y="21" width="1.6" height="1.6" fill="#1a4ad8" opacity="0.61"/><rect x="64" y="24" width="1.6" height="1.6" fill="#1a4ad8" opacity="0.60"/><rect x="64" y="30" width="1.6" height="1.6" fill="#3a8aff" opacity="0.56"/><rect x="64" y="39" width="1.6" height="1.6" fill="#3a8aff" opacity="0.60"/><rect x="64" y="42" width="1.6" height="1.6" fill="#3a8aff" opacity="0.61"/><rect x="64" y="45" width="1.6" height="1.6" fill="#3a8aff" opacity="0.66"/><rect x="68" y="3" width="1.6" height="1.6" fill="#1a4ad8" opacity="0.37"/><rect x="68" y="6" width="1.6" height="1.6" fill="#1a4ad8" opacity="0.69"/><rect x="68" y="9" width="1.6" height="1.6" fill="#1a3ab0" opacity="0.47"/><rect x="68" y="12" width="1.6" height="1.6" fill="#3a8aff" opacity="0.72"/><rect x="68" y="15" width="1.6" height="1.6" fill="#1a3ab0" opacity="0.71"/><rect x="68" y="24" width="1.6" height="1.6" fill="#3a8aff" opacity="0.76"/><rect x="68" y="30" width="1.6" height="1.6" fill="#2a6aff" opacity="0.61"/><rect x="68" y="42" width="1.6" height="1.6" fill="#1a3ab0" opacity="0.80"/><rect x="68" y="45" width="1.6" height="1.6" fill="#1a3ab0" opacity="0.80"/><rect x="68" y="48" width="1.6" height="1.6" fill="#2a6aff" opacity="0.79"/><rect x="72" y="3" width="1.6" height="1.6" fill="#2a6aff" opacity="0.42"/><rect x="72" y="6" width="1.6" height="1.6" fill="#3a8aff" opacity="0.40"/><rect x="72" y="12" width="1.6" height="1.6" fill="#2a6aff" opacity="0.45"/><rect x="72" y="21" width="1.6" height="1.6" fill="#1a3ab0" opacity="0.81"/><rect x="72" y="27" width="1.6" height="1.6" fill="#1a3ab0" opacity="0.60"/><rect x="72" y="33" width="1.6" height="1.6" fill="#1a4ad8" opacity="0.59"/><rect x="72" y="36" width="1.6" height="1.6" fill="#3a8aff" opacity="0.42"/><rect x="72" y="39" width="1.6" height="1.6" fill="#2a6aff" opacity="0.44"/><rect x="72" y="42" width="1.6" height="1.6" fill="#1a3ab0" opacity="0.81"/><rect x="72" y="45" width="1.6" height="1.6" fill="#1a4ad8" opacity="0.42"/><rect x="76" y="3" width="1.6" height="1.6" fill="#1a4ad8" opacity="0.51"/><rect x="76" y="6" width="1.6" height="1.6" fill="#1a3ab0" opacity="0.57"/><rect x="76" y="12" width="1.6" height="1.6" fill="#1a4ad8" opacity="0.77"/><rect x="76" y="15" width="1.6" height="1.6" fill="#3a8aff" opacity="0.53"/><rect x="76" y="18" width="1.6" height="1.6" fill="#2a6aff" opacity="0.65"/><rect x="76" y="21" width="1.6" height="1.6" fill="#1a4ad8" opacity="0.51"/><rect x="76" y="24" width="1.6" height="1.6" fill="#3a8aff" opacity="0.63"/><rect x="76" y="27" width="1.6" height="1.6" fill="#1a3ab0" opacity="0.75"/><rect x="76" y="30" width="1.6" height="1.6" fill="#1a4ad8" opacity="0.72"/><rect x="76" y="39" width="1.6" height="1.6" fill="#1a3ab0" opacity="0.79"/><rect x="80" y="3" width="1.6" height="1.6" fill="#2a6aff" opacity="0.39"/><rect x="80" y="6" width="1.6" height="1.6" fill="#3a8aff" opacity="0.40"/><rect x="80" y="18" width="1.6" height="1.6" fill="#1a3ab0" opacity="0.82"/><rect x="80" y="24" width="1.6" height="1.6" fill="#3a8aff" opacity="0.63"/><rect x="80" y="27" width="1.6" height="1.6" fill="#3a8aff" opacity="0.61"/><rect x="80" y="30" width="1.6" height="1.6" fill="#2a6aff" opacity="0.70"/><rect x="80" y="39" width="1.6" height="1.6" fill="#1a4ad8" opacity="0.72"/><rect x="80" y="42" width="1.6" height="1.6" fill="#3a8aff" opacity="0.60"/><rect x="84" y="3" width="1.6" height="1.6" fill="#1a3ab0" opacity="0.48"/><rect x="84" y="12" width="1.6" height="1.6" fill="#1a4ad8" opacity="0.67"/><rect x="84" y="18" width="1.6" height="1.6" fill="#1a4ad8" opacity="0.54"/><rect x="84" y="24" width="1.6" height="1.6" fill="#2a6aff" opacity="0.78"/><rect x="84" y="27" width="1.6" height="1.6" fill="#1a4ad8" opacity="0.56"/><rect x="84" y="30" width="1.6" height="1.6" fill="#1a3ab0" opacity="0.61"/><rect x="84" y="36" width="1.6" height="1.6" fill="#1a3ab0" opacity="0.59"/><rect x="84" y="39" width="1.6" height="1.6" fill="#1a3ab0" opacity="0.68"/><rect x="84" y="45" width="1.6" height="1.6" fill="#2a6aff" opacity="0.64"/><rect x="88" y="3" width="1.6" height="1.6" fill="#3a8aff" opacity="0.38"/><rect x="88" y="6" width="1.6" height="1.6" fill="#3a8aff" opacity="0.38"/><rect x="88" y="15" width="1.6" height="1.6" fill="#2a6aff" opacity="0.56"/><rect x="88" y="18" width="1.6" height="1.6" fill="#2a6aff" opacity="0.37"/><rect x="88" y="21" width="1.6" height="1.6" fill="#3a8aff" opacity="0.42"/><rect x="88" y="27" width="1.6" height="1.6" fill="#1a4ad8" opacity="0.38"/><rect x="88" y="30" width="1.6" height="1.6" fill="#1a4ad8" opacity="0.45"/><rect x="88" y="33" width="1.6" height="1.6" fill="#2a6aff" opacity="0.41"/><rect x="88" y="36" width="1.6" height="1.6" fill="#3a8aff" opacity="0.58"/><rect x="88" y="39" width="1.6" height="1.6" fill="#3a8aff" opacity="0.53"/><rect x="88" y="48" width="1.6" height="1.6" fill="#1a3ab0" opacity="0.72"/><path d="M19 2 L27 0 L31 8 L28 14 L21 14 Z" fill="#28b8ff"/><circle cx="29" cy="8" r="2.5" fill="#40d0ff"/><path d="M52 7 Q56 5 58 9 L54 11Z" fill="#2090ff"/><path d="M74 14 L80 13 L80 20 L75 19Z" fill="#2a90ff" opacity="0.8"/><path d="M52 28 H82 V33 H52Z" fill="#501030" opacity="0.5"/><path d="M22 26 Q24 14 36 10 Q48 7 56 10 L53 14 Q46 18 42 26 L48 44 Q36 48 26 45 Q20 36 22 26Z" fill="#06102c"/><path d="M24 24 Q28 13 38 10 Q48 8 56 10" stroke="#3a7ae8" stroke-width="1" fill="none"/><path d="M36 19 Q42 14 52 14 Q48 20 44 26 Q39 25 36 19Z" fill="#000104"/><path d="M36 19 Q42 14 52 14" stroke="#4a8af0" stroke-width="0.7" fill="none"/><path d="M25 26 L28 43 M28.5 24 L32 44 M32 24 L35.5 44 M36 26 L39 43 M40 30 L42 42" stroke="#3a78d8" stroke-width="1.1" opacity="0.85"/><path d="M52 38 Q57 31 63 35 L60 46 L52 47Z" fill="#1a4ad0" opacity="0.7"/><path d="M58 51 L66 30 L73 30 L66 51Z" fill="#020204"/><circle cx="62" cy="33.5" r="2.2" fill="#d8f0ff"/></g></svg>
<div class="dot" style="left:884px;top:340px;width:1px;height:1px;background:#888"></div>
<svg class="a" style="left:957px;top:290px" width="90" height="51" viewBox="0 0 90 51"><defs><filter id="bfood" x="-5%" y="-5%" width="110%" height="110%"><feGaussianBlur stdDeviation="0.7"/></filter></defs><g filter="url(#bfood)"><defs><radialGradient id="fsoup" cx="0.45" cy="0.45" r="0.55"><stop offset="0" stop-color="#ffb820"/><stop offset="1" stop-color="#e07a08"/></radialGradient><radialGradient id="fvig" cx="0.5" cy="0.5" r="0.7"><stop offset="0.5" stop-color="#000" stop-opacity="0"/><stop offset="1" stop-color="#000" stop-opacity="0.45"/></radialGradient></defs><rect x="-5" y="-5" width="100" height="61" fill="#3a374c"/><path d="M-5 -5 H60 V6 Q40 9 20 8 L-5 10Z" fill="#242a4c"/><path d="M-5 10 L6 8 L6 30 L-5 30Z" fill="#283056"/><path d="M30 10 H50 V51 H30Z" fill="#45405a" opacity="0.6"/><ellipse cx="9" cy="12" rx="5.5" ry="8" fill="#b8a888" transform="rotate(-25 9 12)"/><ellipse cx="18" cy="13" rx="5.5" ry="8" fill="#a89878" transform="rotate(-25 18 13)"/><path d="M12 19 L21 21 L18 24 L10 21Z" fill="#d89030"/><path d="M17 22 Q28 18 32 26 L32 51 H16Z" fill="#4a3a34"/><circle cx="27" cy="23" r="1.2" fill="#1a1410"/><ellipse cx="4" cy="27" rx="5.5" ry="8" fill="#d89828"/><ellipse cx="14" cy="35" rx="9.5" ry="6.5" fill="#d08a20" transform="rotate(-20 14 35)"/><ellipse cx="14" cy="34" rx="6.5" ry="4" fill="#e0c080" transform="rotate(-20 14 34)"/><ellipse cx="6" cy="46" rx="10" ry="8" fill="#b85418"/><path d="M50 4 Q56 -2 66 2 Q68 10 60 14 Q52 16 50 10Z" fill="#4a8a36"/><circle cx="59" cy="31" r="14.5" fill="#6a3818"/><circle cx="59" cy="31" r="12.8" fill="url(#fsoup)"/><circle cx="59" cy="30.5" r="3.5" fill="#8a9a60"/><circle cx="81" cy="12" r="13" fill="#6a3818"/><circle cx="81" cy="12" r="11.3" fill="url(#fsoup)"/><circle cx="83" cy="11" r="3" fill="#6a7a50"/><path d="M36 42 Q44 38 54 46 L54 51 H34Z" fill="#5a3a2c"/><path d="M44 41 L50 37 L52 44Z" fill="#7a8a58"/><path d="M72 51 L86 36 L90 40 L78 51Z" fill="#4a4a44"/><path d="M82 44 L90 50 V52 H80Z" fill="#907038"/><rect x="-5" y="-5" width="100" height="61" fill="url(#fvig)"/></g></svg>
<div class="lbl" style="left:7.0px;top:345.5px"><div style="letter-spacing:-0.676px;text-indent:-0.676px">2<i>_</i>de</div></div>
<div class="lbl" style="left:124.0px;top:345.5px"><div style="letter-spacing:-0.631px;text-indent:-0.631px">2<i>_</i>dmr<i>_</i>48</div></div>
<div class="lbl" style="left:241.0px;top:345.5px"><div style="letter-spacing:-0.635px;text-indent:-0.635px">2<i>_</i>dmr<i>_</i>120</div></div>
<div class="lbl" style="left:358.0px;top:345.5px"><div style="letter-spacing:-0.422px;text-indent:-0.422px">2<i>_</i>fr</div></div>
<div class="lbl" style="left:475.0px;top:345.5px"><div style="letter-spacing:-0.341px;text-indent:-0.341px">2<i>_</i>help</div></div>
<div class="lbl" style="left:592.0px;top:345.5px"><div style="letter-spacing:-0.839px;text-indent:-0.839px">2<i>_</i>LockScreen<i>_</i><i>_</i><i>_</i>1</div><div style="letter-spacing:-0.406px;text-indent:-0.406px">920<i>_</i>1080<i>_</i>notdim</div><div style="letter-spacing:-0.115px;text-indent:-0.115px">med</div></div>
<div class="lbl" style="left:709.0px;top:345.5px"><div style="letter-spacing:-0.562px;text-indent:-0.562px">2<i>_</i>sadi</div></div>
<div class="lbl" style="left:826.0px;top:345.5px"><div style="letter-spacing:-0.357px;text-indent:-0.357px">2<i>_</i>security<i>_</i>water</div><div style="letter-spacing:-0.168px;text-indent:-0.168px">mark</div></div>
<div class="lbl" style="left:943.0px;top:345.5px"><div style="letter-spacing:-0.100px;text-indent:-0.100px">2<i>_</i>th[1]</div></div>
<svg class="a" style="left:30px;top:398px" width="72" height="90" viewBox="0 0 72 90"><rect width="72" height="90" fill="#05050a"/><rect x="17.1" y="49.0" width="0.7" height="0.7" fill="#aaa" opacity="0.52"/><rect x="43.5" y="56.3" width="0.7" height="0.7" fill="#aaa" opacity="0.34"/><rect x="0.9" y="75.4" width="0.7" height="0.7" fill="#aaa" opacity="0.46"/><rect x="16.9" y="89.6" width="0.7" height="0.7" fill="#aaa" opacity="0.58"/><rect x="60.2" y="42.9" width="0.7" height="0.7" fill="#aaa" opacity="0.68"/><rect x="10.8" y="57.1" width="0.7" height="0.7" fill="#aaa" opacity="0.82"/><rect x="37.7" y="66.7" width="0.7" height="0.7" fill="#aaa" opacity="0.70"/><rect x="4.6" y="68.2" width="0.7" height="0.7" fill="#aaa" opacity="0.65"/><rect x="21.7" y="2.8" width="0.7" height="0.7" fill="#aaa" opacity="0.82"/><rect x="34.0" y="64.7" width="0.7" height="0.7" fill="#aaa" opacity="0.83"/><rect x="51.4" y="82.9" width="0.7" height="0.7" fill="#aaa" opacity="0.54"/><rect x="57.7" y="40.0" width="0.7" height="0.7" fill="#aaa" opacity="0.86"/><rect x="63.3" y="8.8" width="0.7" height="0.7" fill="#aaa" opacity="0.38"/><rect x="15.6" y="86.9" width="0.7" height="0.7" fill="#aaa" opacity="0.56"/><rect x="45.1" y="27.1" width="0.7" height="0.7" fill="#aaa" opacity="0.60"/><rect x="27.8" y="31.6" width="0.7" height="0.7" fill="#aaa" opacity="0.65"/><rect x="42.1" y="81.4" width="0.7" height="0.7" fill="#aaa" opacity="0.71"/><rect x="66.9" y="77.1" width="0.7" height="0.7" fill="#aaa" opacity="0.89"/><rect x="48.3" y="14.7" width="0.7" height="0.7" fill="#aaa" opacity="0.82"/><rect x="69.5" y="81.4" width="0.7" height="0.7" fill="#aaa" opacity="0.64"/><rect x="51.4" y="19.0" width="0.7" height="0.7" fill="#aaa" opacity="0.80"/><rect x="41.3" y="25.6" width="0.7" height="0.7" fill="#aaa" opacity="0.34"/><rect x="61.5" y="89.1" width="0.7" height="0.7" fill="#aaa" opacity="0.35"/><rect x="57.6" y="36.9" width="0.7" height="0.7" fill="#aaa" opacity="0.39"/><rect x="21.2" y="69.2" width="0.7" height="0.7" fill="#aaa" opacity="0.82"/><rect x="3.2" y="55.3" width="0.7" height="0.7" fill="#aaa" opacity="0.33"/><rect x="51.7" y="29.8" width="0.7" height="0.7" fill="#aaa" opacity="0.83"/><rect x="70.6" y="45.5" width="0.7" height="0.7" fill="#aaa" opacity="0.90"/><rect x="22.3" y="6.9" width="0.7" height="0.7" fill="#aaa" opacity="0.66"/><rect x="2.3" y="17.8" width="0.7" height="0.7" fill="#aaa" opacity="0.54"/><rect x="44.0" y="14.1" width="0.7" height="0.7" fill="#aaa" opacity="0.33"/><rect x="62.5" y="28.2" width="0.7" height="0.7" fill="#aaa" opacity="0.88"/><rect x="64.6" y="34.0" width="0.7" height="0.7" fill="#aaa" opacity="0.58"/><rect x="37.4" y="57.9" width="0.7" height="0.7" fill="#aaa" opacity="0.66"/><rect x="40.3" y="55.8" width="0.7" height="0.7" fill="#aaa" opacity="0.86"/><rect x="36.5" y="38.8" width="0.7" height="0.7" fill="#aaa" opacity="0.73"/><rect x="17.1" y="27.1" width="0.7" height="0.7" fill="#aaa" opacity="0.89"/><rect x="37.5" y="49.4" width="0.7" height="0.7" fill="#aaa" opacity="0.31"/><rect x="29.9" y="52.2" width="0.7" height="0.7" fill="#aaa" opacity="0.31"/><rect x="44.3" y="56.9" width="0.7" height="0.7" fill="#aaa" opacity="0.34"/><rect x="45.2" y="42.0" width="0.7" height="0.7" fill="#aaa" opacity="0.71"/><rect x="25.4" y="63.6" width="0.7" height="0.7" fill="#aaa" opacity="0.74"/><rect x="1.6" y="5.5" width="0.7" height="0.7" fill="#aaa" opacity="0.71"/><rect x="69.4" y="22.6" width="0.7" height="0.7" fill="#aaa" opacity="0.57"/><rect x="42.7" y="28.8" width="0.7" height="0.7" fill="#aaa" opacity="0.52"/><rect x="22.5" y="33.2" width="0.7" height="0.7" fill="#aaa" opacity="0.66"/><rect x="21.6" y="33.9" width="0.7" height="0.7" fill="#aaa" opacity="0.76"/><rect x="1.9" y="51.2" width="0.7" height="0.7" fill="#aaa" opacity="0.74"/><rect x="22.3" y="20.0" width="0.7" height="0.7" fill="#aaa" opacity="0.78"/><rect x="17.2" y="16.9" width="0.7" height="0.7" fill="#aaa" opacity="0.56"/><rect x="50.3" y="9.2" width="0.7" height="0.7" fill="#aaa" opacity="0.49"/><rect x="24.0" y="75.0" width="0.7" height="0.7" fill="#aaa" opacity="0.56"/><rect x="61.6" y="15.2" width="0.7" height="0.7" fill="#aaa" opacity="0.50"/><rect x="46.8" y="79.6" width="0.7" height="0.7" fill="#aaa" opacity="0.57"/><rect x="16.2" y="10.9" width="0.7" height="0.7" fill="#aaa" opacity="0.62"/><rect x="13.7" y="72.6" width="0.7" height="0.7" fill="#aaa" opacity="0.80"/><rect x="13.2" y="25.1" width="0.7" height="0.7" fill="#aaa" opacity="0.78"/><rect x="46.2" y="72.6" width="0.7" height="0.7" fill="#aaa" opacity="0.51"/><rect x="9.3" y="26.3" width="0.7" height="0.7" fill="#aaa" opacity="0.78"/><rect x="19.5" y="31.2" width="0.7" height="0.7" fill="#aaa" opacity="0.55"/><circle cx="48" cy="40" r="6" fill="#d8c090"/><ellipse cx="46" cy="40" rx="14" ry="3" fill="none" stroke="#c8b088" stroke-width="1.5" transform="rotate(15 46 40)"/><circle cx="27.5" cy="52" r="8" fill="#c8a890"/><path d="M20 50H35M20 54H35" stroke="#e8d0c0" stroke-width="1.2"/><circle cx="60" cy="31.5" r="3" fill="#70c0e8"/><circle cx="67.3" cy="26.3" r="3" fill="#6a9ae0"/><circle cx="12.8" cy="63.5" r="1.6" fill="#c86030"/><circle cx="2.5" cy="71" r="2.5" fill="#a0a8c0"/></svg>
<svg class="a" style="left:147px;top:398px" width="72" height="90" viewBox="0 0 72 90"><defs><filter id="brhino" x="-5%" y="-5%" width="110%" height="110%"><feGaussianBlur stdDeviation="0.55"/></filter></defs><g filter="url(#brhino)"><defs><linearGradient id="rg" x1="0" y1="0" x2="0" y2="1"><stop offset="0" stop-color="#98683a"/><stop offset="0.25" stop-color="#a86e38"/><stop offset="0.45" stop-color="#c07434"/><stop offset="0.75" stop-color="#c88038"/><stop offset="1" stop-color="#c89048"/></linearGradient></defs><rect x="-5" y="-5" width="82" height="100" fill="url(#rg)"/><path d="M-5 18 Q30 14 77 20 V26 Q40 22 -5 26Z" fill="#c08040" opacity="0.25"/><path d="M-5 76 Q20 72 40 80 Q60 74 77 78 V84 H-5Z" fill="#d8a060" opacity="0.2"/><path d="M4.5 37.5 L12 47 L15 44 L16 36 L20 45 L24 40 L27 33 L31 37 L38 30 L44 26 L52 25 L58 29 L62 28 L68 30 L72 34 L77 36 V66 L70 68 L66 66 L60 64 L58 73 L52 73 L50 65 L42 65 L40 74 L34 74 L32 64 L26 62 L20 62 L14 62 L12 56 L10 50 Z" fill="#5c5652"/><path d="M44 26 L52 25 L58 29 L54 40 L42 36Z" fill="#6a6460" opacity="0.8"/><path d="M14 52 Q20 58 28 58 L26 62 L14 62 Z" fill="#3a3432"/><path d="M34 62 L40 62 L40 74 L34 74Z M52 62 L58 62 L58 73 L52 73Z" fill="#4a4442"/></g></svg>
<svg class="a" style="left:264px;top:398px" width="72" height="90" viewBox="0 0 72 90"><defs><filter id="blake" x="-5%" y="-5%" width="110%" height="110%"><feGaussianBlur stdDeviation="0.7"/></filter></defs><g filter="url(#blake)"><defs><linearGradient id="lk" x1="0" y1="0" x2="0" y2="1"><stop offset="0" stop-color="#e8ecf0"/><stop offset="0.6" stop-color="#d8dee6"/><stop offset="1" stop-color="#b8c4d0"/></linearGradient><linearGradient id="lw" x1="0" y1="0" x2="1" y2="1"><stop offset="0" stop-color="#6ab8c8"/><stop offset="1" stop-color="#9ad0e0"/></linearGradient></defs><rect x="-5" y="-5" width="82" height="100" fill="url(#lk)"/><path d="M46 -5 H77 V26 Q68 22 62 18 Q66 12 58 10 Q50 8 46 -5Z" fill="#5a9ae0"/><path d="M-5 20 Q20 16 40 26 Q20 30 -5 28Z" fill="#c4ccd6" opacity="0.7"/><path d="M30 0 Q44 4 50 12 Q40 14 30 8Z" fill="#f4f6f8" opacity="0.8"/><path d="M-5 34 Q10 36 20 40 L36 36 Q44 38 52 34 L77 26 V56 H-5Z" fill="#3a5a72"/><path d="M77 27 Q60 36 44 44 Q32 50 24 54 Q34 58 50 62 L77 68Z" fill="#2e4a30"/><path d="M-5 47 Q12 46 26 52 Q44 61 77 63 V85 Q58 80 42 72 Q22 60 -5 58Z" fill="url(#lw)"/><path d="M-5 58 Q22 60 42 72 Q58 80 77 85 V95 H-5Z" fill="#3a7236"/><path d="M-5 64 Q10 66 20 68 L26 95 H-5Z" fill="#4a8a3a" opacity="0.6"/></g></svg>
<div class="topgrad" style="left:416px;top:398px;width:2px;height:90px;background:linear-gradient(90deg,#3a6aa8,#a8c8f0)"></div>
<svg class="fi" style="left:504.0px;top:402px" width="62" height="84"><use href="#fileico"/></svg>
<svg class="fi" style="left:621.0px;top:402px" width="62" height="84"><use href="#fileico"/></svg>
<svg class="fi" style="left:738.0px;top:402px" width="62" height="84"><use href="#fileico"/></svg>
<svg class="fi" style="left:855.0px;top:402px" width="62" height="84"><use href="#fileico"/></svg>
<svg class="a" style="left:957px;top:414px" width="90" height="74" viewBox="0 0 90 74"><defs><filter id="bsky" x="-5%" y="-5%" width="110%" height="110%"><feGaussianBlur stdDeviation="1.6"/></filter></defs><g filter="url(#bsky)"><defs><linearGradient id="sk" x1="0" y1="0" x2="0" y2="1"><stop offset="0" stop-color="#5c9ed2"/><stop offset="0.35" stop-color="#4a8ac6"/><stop offset="0.55" stop-color="#2a70b6"/><stop offset="1" stop-color="#0656a0"/></linearGradient></defs><rect x="-5" y="-5" width="100" height="84" fill="url(#sk)"/><path d="M-5 4 Q15 6 35 11 Q50 14 70 11 Q55 18 35 19 Q15 20 -5 18Z" fill="#dce8f4" opacity="0.55"/><path d="M-5 14 Q10 16 20 22 Q15 30 -5 32Z" fill="#c8dcee" opacity="0.45"/><path d="M40 28 Q60 22 90 18 V34 Q70 38 55 36 Q45 34 40 28Z" fill="#c8dcee" opacity="0.45"/><path d="M60 0 Q80 2 90 0 V10 Q75 8 60 0Z" fill="#a8c8e8" opacity="0.35"/></g></svg>
<div class="lbl" style="left:7.0px;top:493.3px"><div style="letter-spacing:-0.100px;text-indent:-0.100px">2<i>_</i>th[2]</div></div>
<div class="lbl" style="left:124.0px;top:493.3px"><div style="letter-spacing:-0.100px;text-indent:-0.100px">2<i>_</i>th[3]</div></div>
<div class="lbl" style="left:241.0px;top:493.3px"><div style="letter-spacing:-0.100px;text-indent:-0.100px">2<i>_</i>th[4]</div></div>
<div class="lbl" style="left:358.0px;top:493.3px"><div style="letter-spacing:-0.294px;text-indent:-0.294px">2<i>_</i>topGradRepeat</div></div>
<div class="lbl" style="left:475.0px;top:493.3px"><div style="letter-spacing:-0.465px;text-indent:-0.465px">2<i>_</i>welcomescan</div></div>
<div class="lbl" style="left:592.0px;top:493.3px"><div style="letter-spacing:-0.360px;text-indent:-0.360px">2<i>_</i>wmpnss<i>_</i>color</div><div style="letter-spacing:-0.680px;text-indent:-0.680px">32</div></div>
<div class="lbl" style="left:709.0px;top:493.3px"><div style="letter-spacing:-0.360px;text-indent:-0.360px">2<i>_</i>wmpnss<i>_</i>color</div><div style="letter-spacing:-0.680px;text-indent:-0.680px">48</div></div>
<div class="lbl" style="left:826.0px;top:493.3px"><div style="letter-spacing:-0.360px;text-indent:-0.360px">2<i>_</i>wmpnss<i>_</i>color</div><div style="letter-spacing:-0.677px;text-indent:-0.677px">120</div></div>
<div class="lbl" style="left:943.0px;top:493.3px"><div style="letter-spacing:-0.688px;text-indent:-0.688px">3</div></div>
<svg class="a" style="left:21px;top:598px" width="90" height="22" viewBox="0 0 90 22"><rect width="90" height="22" fill="#6a9ed6"/><text x="3" y="20.5" font-family="Liberation Sans" font-weight="bold" font-size="24" fill="#fff" stroke="#fff" stroke-width="1.4" stroke-linejoin="round" textLength="45" lengthAdjust="spacingAndGlyphs">ASP</text><circle cx="52.5" cy="18.5" r="2.6" fill="#fff"/><path d="M63 13 Q66 11 69 13 V18 H63Z" fill="#d8eef8"/><path d="M68 18 Q73 21 78 18 L77 15 H69Z" fill="#f4d868"/><path d="M74 6 H81 L80 10 H75Z" fill="#f08a50"/><text x="55.5" y="20.5" font-family="Liberation Sans" font-size="24" fill="#0c1628" stroke="#0c1628" stroke-width="0.7" textLength="33" lengthAdjust="spacingAndGlyphs">net</text></svg>
<svg class="a" style="left:138px;top:530px" width="90" height="90" viewBox="0 0 90 90"><defs><filter id="bgroot" x="-5%" y="-5%" width="110%" height="110%"><feGaussianBlur stdDeviation="0.35"/></filter></defs><g filter="url(#bgroot)"><rect width="90" height="90" fill="#2d4058"/><rect x="25.2" y="4.5" width="49.4" height="25" fill="#161c24" stroke="#a8acb0" stroke-width="0.7"/><rect x="25.2" y="4.5" width="49.4" height="1.6" fill="#b8bcc0"/><path d="M34 29.5 L33 33 L38 29.5Z" fill="#c8ccd0"/><text x="27" y="14.5" font-family="Liberation Mono" font-size="5.8" fill="#6ab040" textLength="43" lengthAdjust="spacingAndGlyphs">#I AM ROOT!_</text><path d="M13 50 Q14 42 22 41 L30 46 L32 66 Q26 70 20 66 Q14 60 13 50Z" fill="#3c4350"/><path d="M22 72.3 L42.6 50.4 L68.4 60.7 L51.6 87.8Z" fill="#e6dfcf"/><path d="M44 44 L53 40 L55 58 L47 61Z" fill="#8ac858" opacity="0.9"/><path d="M40 58 L52 55 L55 62 L43 64Z" fill="#1c2028"/><path d="M56 40 L64 33 L74 38 L76 58 L68 64 L56 60Z" fill="#9c9ea2"/><path d="M54 40 L60 38 L62 62 L55 60Z" fill="#c4c6ca"/><path d="M64 33 L74 38 L76 58 L68 64Z" fill="#7e8084"/><path d="M17 30 Q16 22 19 20 L21 24 L24 19 L26 25 L28 24 L28.5 42 Q26 46 22 44 Q18 40 17 30Z" fill="#9a7048"/><path d="M18 46 Q24 42 33 44 L36 58 Q30 63 22 61 Q17 56 18 46Z" fill="#ececec"/><circle cx="30" cy="52" r="3" fill="#a89070"/><path d="M30 50 L44 47 L46 50 L32 54Z M26 57 L42 56 L44 59 L28 61Z" fill="#8a6440"/><ellipse cx="38" cy="67.5" rx="3" ry="3" fill="#9ac040"/><ellipse cx="49" cy="77" rx="2.5" ry="3.5" fill="#1a1a1a"/><ellipse cx="49" cy="78" rx="1.4" ry="2" fill="#e8e8e8"/></g></svg>
<div class="thinblue" style="left:299px;top:614px;width:1px;height:6px;background:#2a58c8"></div>
<svg class="a" style="left:372px;top:562px" width="90" height="58" viewBox="0 0 90 58"><rect width="90" height="58" fill="#d4d0c8"/><defs><linearGradient id="clt" x1="0" x2="1"><stop offset="0" stop-color="#0a2496"/><stop offset="1" stop-color="#3a6ec8"/></linearGradient></defs><rect width="90" height="3" fill="url(#clt)"/><defs><linearGradient id="pk" x1="0" x2="1"><stop offset="0" stop-color="#f6d4d8"/><stop offset="0.7" stop-color="#fbeef0"/><stop offset="1" stop-color="#ffffff"/></linearGradient></defs><rect x="1" y="3" width="88" height="8" fill="url(#pk)"/><path d="M3 7H70" stroke="#6a5a5a" stroke-width="2.2" opacity="0.75"/><rect x="85" y="3.5" width="3" height="7" fill="#c04050" opacity="0.8"/><path d="M4 17H75" stroke="#9a9a9a" stroke-width="0.8"/><path d="M4 20.5H60" stroke="#9a9a9a" stroke-width="0.8"/><path d="M4 24H75" stroke="#9a9a9a" stroke-width="0.8"/><path d="M4 27.5H60" stroke="#9a9a9a" stroke-width="0.8"/><path d="M4 31H75" stroke="#9a9a9a" stroke-width="0.8"/><path d="M4 34.5H60" stroke="#9a9a9a" stroke-width="0.8"/><path d="M4 38H75" stroke="#9a9a9a" stroke-width="0.8"/><rect x="5" y="43" width="37" height="3" fill="#fff"/><rect x="48" y="43" width="37" height="3" fill="#fff"/><path d="M5 49H48" stroke="#9a9a9a" stroke-width="0.8"/><rect x="41" y="52" width="14" height="4" fill="#eee" stroke="#888" stroke-width="0.5"/><rect x="57" y="52" width="14" height="4" fill="#eee" stroke="#888" stroke-width="0.5"/><rect x="73" y="52" width="14" height="4" fill="#eee" stroke="#888" stroke-width="0.5"/></svg>
<svg class="fi" style="left:504.0px;top:534px" width="62" height="84"><use href="#fileico"/></svg>
<svg class="fi" style="left:621.0px;top:534px" width="62" height="84"><use href="#fileico"/></svg>
<svg class="a" style="left:723px;top:561px" width="90" height="59" viewBox="0 0 90 59"><rect width="90" height="59" fill="#ece9d8"/><defs><linearGradient id="xpt2" x1="0" x2="1"><stop offset="0" stop-color="#1e5ce0"/><stop offset="1" stop-color="#3a80f0"/></linearGradient></defs><rect width="90" height="4.5" fill="url(#xpt2)"/><rect x="85" y="0.5" width="4" height="3.6" fill="#e06a48"/><rect x="0" y="0" width="0.8" height="59" fill="#3a6ad8"/><rect x="89.2" y="0" width="0.8" height="59" fill="#3a6ad8"/><rect x="0" y="58" width="90" height="1" fill="#3a6ad8"/><defs><linearGradient id="pk" x1="0" x2="1"><stop offset="0" stop-color="#f6d4d8"/><stop offset="0.7" stop-color="#fbeef0"/><stop offset="1" stop-color="#ffffff"/></linearGradient></defs><rect x="1" y="4.5" width="88" height="8" fill="url(#pk)"/><path d="M3 8.5H70" stroke="#6a5a5a" stroke-width="2.2" opacity="0.75"/><rect x="85" y="5.0" width="3" height="7" fill="#c04050" opacity="0.8"/><path d="M4 18.5H75" stroke="#9a9a9a" stroke-width="0.8"/><path d="M4 22.0H60" stroke="#9a9a9a" stroke-width="0.8"/><path d="M4 25.5H75" stroke="#9a9a9a" stroke-width="0.8"/><path d="M4 29.0H60" stroke="#9a9a9a" stroke-width="0.8"/><path d="M4 32.5H75" stroke="#9a9a9a" stroke-width="0.8"/><path d="M4 36.0H60" stroke="#9a9a9a" stroke-width="0.8"/><path d="M4 39.5H75" stroke="#9a9a9a" stroke-width="0.8"/><rect x="5" y="44.5" width="37" height="3" fill="#fff"/><rect x="48" y="44.5" width="37" height="3" fill="#fff"/><path d="M5 50.5H48" stroke="#9a9a9a" stroke-width="0.8"/><rect x="41" y="53" width="14" height="4" fill="#eee" stroke="#888" stroke-width="0.5"/><rect x="57" y="53" width="14" height="4" fill="#eee" stroke="#888" stroke-width="0.5"/><rect x="73" y="53" width="14" height="4" fill="#eee" stroke="#888" stroke-width="0.5"/></svg>
<svg class="a" style="left:873px;top:596px" width="24" height="24" viewBox="0 0 24 24"><defs><linearGradient id="hg" x1="0" y1="0" x2="0" y2="1"><stop offset="0" stop-color="#5a9ae8"/><stop offset="0.35" stop-color="#2a5cd0"/><stop offset="1" stop-color="#2050c0"/></linearGradient></defs><rect width="24" height="24" fill="#6a9ed8"/><circle cx="12" cy="12" r="11" fill="#fff"/><circle cx="12" cy="12" r="8.9" fill="url(#hg)"/><path d="M8.8 8.8 Q9.3 5.6 12.4 5.6 Q15.6 5.8 15.4 8.6 Q15.1 10.6 13 11.9 Q11.8 12.8 12 14.8" stroke="#fff" stroke-width="2" fill="none" stroke-linecap="round"/><circle cx="12" cy="17.8" r="1.3" fill="#fff"/></svg>
<svg class="a" style="left:957px;top:569px" width="90" height="51" viewBox="0 0 90 51"><defs><filter id="block2" x="-5%" y="-5%" width="110%" height="110%"><feGaussianBlur stdDeviation="0.55"/></filter></defs><g filter="url(#block2)"><defs><linearGradient id="cs" x1="0" y1="1" x2="1" y2="0"><stop offset="0" stop-color="#8ac8f0"/><stop offset="0.55" stop-color="#3080d8"/><stop offset="1" stop-color="#1050c0"/></linearGradient><linearGradient id="crk" x1="0" y1="0" x2="1" y2="0.3"><stop offset="0" stop-color="#a88048"/><stop offset="0.6" stop-color="#7a5a30"/><stop offset="1" stop-color="#4a3418"/></linearGradient></defs><rect x="-5" y="-5" width="100" height="61" fill="#0a0806"/><path d="M55 4 Q72 -2 95 4 V12 Q80 6 66 8Z" fill="#2a1e10"/><path d="M62 6 Q74 6 82 14 Q92 22 95 30 V42 H68 Q66 30 62 6Z" fill="url(#crk)"/><path d="M70 14 Q78 18 82 30 L80 40 Q74 36 70 30Z" fill="#b89058" opacity="0.55"/><path d="M21 22.6 L31.6 17.8 L41.2 15.9 L47 10 L55.6 5.8 L62.4 10 L67.2 18.8 L67.2 28.4 L27.7 29.4 Z" fill="url(#cs)"/><ellipse cx="52" cy="12" rx="4" ry="2.5" fill="#e0f0ff" opacity="0.75"/><path d="M26 29 H68 V32.5 H33Z" fill="#3a6a80"/><path d="M33 32.5 H70 L95 40 V42 Q70 44 42 46 Z" fill="#9a7448"/><path d="M34 31 L36 24 L40 25 L42 31Z M52 31 L55 22 L60 24 L62 31Z" fill="#b89050"/><path d="M42 46 Q70 44 95 42 V56 H42Z" fill="#1c1a16"/></g></svg>
<div class="lbl" style="left:7.0px;top:625.3px"><div style="letter-spacing:-0.647px;text-indent:-0.647px">3<i>_</i>ASPdotNET<i>_</i>lo</div><div style="letter-spacing:0.320px;text-indent:0.320px">go</div></div>
<div class="lbl" style="left:124.0px;top:625.3px"><div style="letter-spacing:-0.463px;text-indent:-0.463px">3<i>_</i>avatar</div></div>
<div class="lbl" style="left:241.0px;top:625.3px"><div style="letter-spacing:-0.599px;text-indent:-0.599px">3<i>_</i>darkBlue<i>_</i>GRA</div><div style="letter-spacing:-0.672px;text-indent:-0.672px">D</div></div>
<div class="lbl" style="left:358.0px;top:625.3px"><div style="letter-spacing:-0.676px;text-indent:-0.676px">3<i>_</i>de</div></div>
<div class="lbl" style="left:475.0px;top:625.3px"><div style="letter-spacing:-0.631px;text-indent:-0.631px">3<i>_</i>dmr<i>_</i>48</div></div>
<div class="lbl" style="left:592.0px;top:625.3px"><div style="letter-spacing:-0.635px;text-indent:-0.635px">3<i>_</i>dmr<i>_</i>120</div></div>
<div class="lbl" style="left:709.0px;top:625.3px"><div style="letter-spacing:-0.422px;text-indent:-0.422px">3<i>_</i>fr</div></div>
<div class="lbl" style="left:826.0px;top:625.3px"><div style="letter-spacing:-0.341px;text-indent:-0.341px">3<i>_</i>help</div></div>
<div class="lbl" style="left:943.0px;top:625.3px"><div style="letter-spacing:-0.839px;text-indent:-0.839px">3<i>_</i>LockScreen<i>_</i><i>_</i><i>_</i>1</div><div style="letter-spacing:-0.406px;text-indent:-0.406px">920<i>_</i>1080<i>_</i>notdim</div><div style="letter-spacing:-0.115px;text-indent:-0.115px">med</div></div>
</div>
</div>
</div>
</body></html>
